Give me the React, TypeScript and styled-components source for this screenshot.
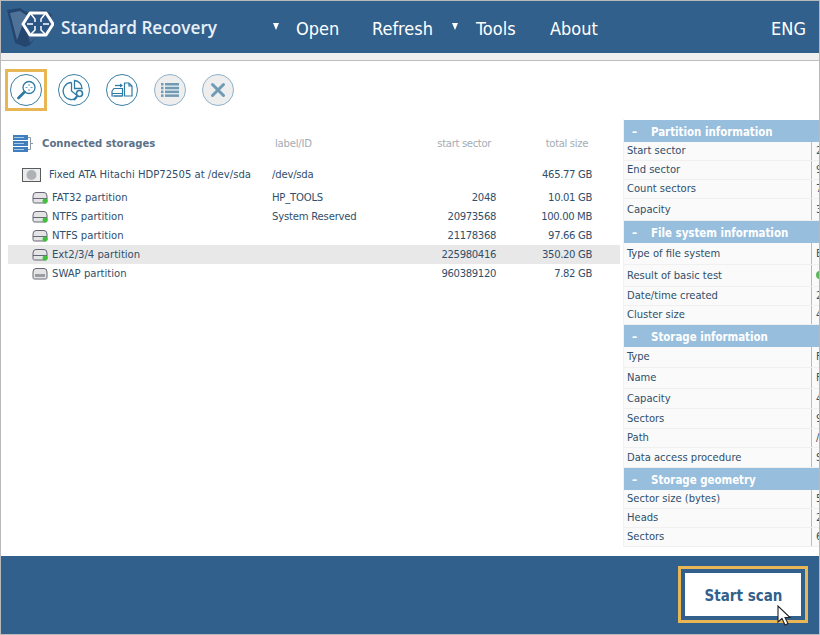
import React from "react";
import styled, { createGlobalStyle } from "styled-components";

const GlobalStyle = createGlobalStyle`
  html, body { margin: 0; padding: 0; background: #fff; }
  body { font-family: "DejaVu Sans Condensed", "DejaVu Sans", sans-serif; }
`;

const Window = styled.div`
  box-sizing: border-box;
  width: 820px;
  height: 635px;
  border: 1px solid #b9b9b9;
  display: flex;
  flex-direction: column;
  overflow: hidden;
  background: #fff;
`;

const Header = styled.header`
  height: 52px;
  flex: none;
  background: #32608c;
  display: flex;
  align-items: center;
  color: #fff;
`;

const Brand = styled.div`
  display: flex;
  align-items: center;
  width: 267px;
  padding-left: 6px;
  gap: 7px;
  box-sizing: border-box;
`;

const BrandName = styled.span`
  font-family: "Open Sans", sans-serif;
  font-size: 17.2px;
  font-weight: 600;
  color: #e8eff6;
`;

const MenuItem = styled.span<{ $width: number }>`
  display: flex;
  align-items: center;
  width: ${(p) => p.$width}px;
  font-size: 18px;
  line-height: 24px;
  padding-top: 3px;
`;

const Caret = styled.i<{ $width: number }>`
  display: block;
  width: ${(p) => p.$width}px;
  height: 12px;
  margin-top: 4px;
  &::before {
    content: "";
    display: block;
    margin: 0 0 0 5px;
    width: 0;
    height: 0;
    border-left: 3.5px solid transparent;
    border-right: 3.5px solid transparent;
    border-top: 7px solid #fff;
  }
`;

const Lang = styled.span`
  margin-left: auto;
  margin-right: 13px;
  font-size: 18px;
  padding-top: 3px;
`;

const SubBar = styled.div`
  height: 7px;
  flex: none;
  background: #f0f0f0;
  border-bottom: 1px solid #bdbdbd;
`;

const Toolbar = styled.div`
  height: 58px;
  flex: none;
  display: flex;
  align-items: center;
  gap: 16px;
  padding: 0 0 0 9px;
  box-sizing: border-box;
`;

const ToolSlot = styled.div<{ $active?: boolean }>`
  width: 32px;
  height: 32px;
  outline: ${(p) => (p.$active ? "3px solid #e8b654" : "none")};
  outline-offset: 2.5px;
`;

const ToolButton = styled.button<{ $disabled?: boolean }>`
  width: 32px;
  height: 32px;
  padding: 0;
  border-radius: 50%;
  display: flex;
  align-items: center;
  justify-content: center;
  border: 1.5px solid ${(p) => (p.$disabled ? "#8fb3c9" : "#3a7fa6")};
  background: ${(p) => (p.$disabled ? "#eeeeee" : "#fff")};
  color: ${(p) => (p.$disabled ? "#6f9bb5" : "#2f7ba5")};
  box-sizing: border-box;
`;

const Content = styled.main`
  flex: 1;
  min-height: 0;
  display: flex;
  align-items: flex-start;
`;

const LeftPane = styled.section`
  width: 622px;
  flex: none;
  padding: 3px 0 0 7px;
  box-sizing: border-box;
`;

const TreeRow = styled.div<{ $selected?: boolean; $height: number }>`
  display: grid;
  grid-template-columns: 264px 130px 94px 96px;
  align-items: center;
  height: ${(p) => p.$height}px;
  width: 612px;
  background: ${(p) => (p.$selected ? "#e8e8e8" : "transparent")};
  font-size: 11.2px;
  color: #2f4f6b;
`;

const HeadRow = styled(TreeRow)`
  height: 42px;
  color: #a3acb5;
  margin-bottom: 1px;
`;

const DiskRow = styled(TreeRow)`
  margin-bottom: 4px;
`;

const Heading = styled.div`
  display: flex;
  align-items: center;
  gap: 9px;
  padding-left: 5px;
  font-weight: bold;
  color: #5b7186;
`;

const NameCell = styled.div<{ $indent: number }>`
  display: flex;
  align-items: center;
  gap: 3px;
  padding-left: ${(p) => p.$indent}px;
  white-space: nowrap;
`;

const DiskName = styled(NameCell)`
  gap: 8px;
`;

const TextCell = styled.div<{ $inset?: number }>`
  padding-left: ${(p) => p.$inset ?? 0}px;
  letter-spacing: -0.2px;
  white-space: nowrap;
`;

const NumCell = styled.div<{ $inset?: number }>`
  text-align: right;
  padding-right: ${(p) => p.$inset ?? 0}px;
  letter-spacing: -0.35px;
  white-space: nowrap;
`;

const RightPane = styled.aside`
  flex: 1;
  min-width: 0;
  overflow: hidden;
  padding-top: 1px;
  border-left: 1px solid #f2f2f2;
`;

const SectionHead = styled.div`
  height: 22px;
  padding-top: 1px;
  box-sizing: border-box;
  background: #97bedd;
  color: #fff;
  display: flex;
  align-items: center;
  font-size: 11.4px;
  font-weight: bold;
  white-space: nowrap;
`;

const Dash = styled.span`
  width: 27px;
  padding-left: 8px;
  box-sizing: border-box;
`;

const InfoRow = styled.div<{ $height: number }>`
  display: grid;
  grid-template-columns: 188px 1fr;
  height: ${(p) => p.$height}px;
  background: #fafafa;
  border-bottom: 1px solid #f0f0f0;
  box-sizing: border-box;
  font-size: 11.1px;
  color: #2f4f6b;
`;

const InfoKey = styled.div`
  display: flex;
  align-items: center;
  padding: 0 0 1px 3px;
  border-right: 1px solid #bcbcbc;
  white-space: nowrap;
`;

const InfoValue = styled.div`
  display: flex;
  align-items: center;
  padding: 0 0 1px 4px;
  white-space: nowrap;
`;

const GreenDot = styled.span`
  width: 8px;
  height: 8px;
  border-radius: 50%;
  background: #5cb85c;
`;

const Footer = styled.footer`
  height: 78px;
  flex: none;
  background: #32608c;
  display: flex;
  justify-content: flex-end;
  align-items: flex-start;
  padding: 17px 18px 0 0;
  box-sizing: border-box;
`;

const ScanButton = styled.button`
  position: relative;
  width: 116px;
  height: 43px;
  background: #fff;
  border: none;
  padding: 2px 0 0 1px;
  color: #32608c;
  font-family: "DejaVu Sans Condensed", "DejaVu Sans", sans-serif;
  font-size: 15px;
  font-weight: bold;
  outline: 3px solid #e8b654;
  outline-offset: 4px;
`;

const Pointer = styled.svg`
  position: absolute;
  left: 92px;
  top: 32px;
`;

const Logo = () => (
  <svg width="47" height="46" viewBox="0 0 47 46">
    <path d="M0 6 L13 4 L19 8 L38 6 L45 11 L23 41 L18 43 L8 39 Z" fill="#25466f" />
    <path d="M3 9 L13 7 L19 11 L36 9 L16 20 L10 36 Z" fill="#4f7299" />
    <path d="M18 21 L23 39 L30 32 L20 18 Z" fill="#3a5f8a" />
    <path d="M23 9 L39 9 L46 20 L39 31 L23 31 L16 20 Z" fill="#2c5685" stroke="#fff" strokeWidth="3" strokeLinejoin="round" />
    <path
      d="M24 10 L28 15 V18 M38 10 L34 15 V18 M28 22 V26 L24 30 M34 22 V26 L38 30 M20 20 H26 M36 20 H42"
      stroke="#fff"
      strokeWidth="1.5"
      fill="none"
    />
  </svg>
);

const SearchIcon = () => (
  <svg width="24" height="24" viewBox="0 0 24 24" fill="none" stroke="currentColor">
    <circle cx="15" cy="9.5" r="6" strokeWidth="1.3" />
    <path d="M15 6v2M15 11v2M11.5 9.5h2M16.5 9.5h2" strokeWidth="1.1" opacity="0.7" />
    <path d="M10.5 14L4.5 20" strokeWidth="2.8" strokeLinecap="round" />
  </svg>
);

const ChartIcon = () => (
  <svg width="26" height="26" viewBox="0 0 26 26" fill="none" stroke="currentColor" strokeWidth="1.3">
    <path d="M10.5 5.5a8.5 8.5 0 1 0 5 15.5" />
    <path d="M10.5 5.5v8.5l5 4" />
    <path d="M13.5 3.5a8 8 0 0 1 7.5 8h-7.5z" />
    <circle cx="18.5" cy="16.5" r="3" strokeWidth="1.6" />
    <path d="M16.3 19l-3 3.5" strokeWidth="2" strokeLinecap="round" />
  </svg>
);

const TransferIcon = () => (
  <svg width="26" height="26" viewBox="0 0 26 26" fill="none" stroke="currentColor" strokeWidth="1.2">
    <path d="M15.5 6h4.5l3 3v10h-7.5z" />
    <path d="M20 6v3h3" />
    <path d="M3 14l2-2.5h8.5v7.500H3z" />
    <path d="M3 16.500h10M5 19h8" strokeWidth="1" />
    <path d="M6 8.500h7" strokeWidth="1.300" />
    <path d="M11 6.500l3 2-3 2z" fill="currentColor" stroke="none" />
  </svg>
);

const ListIcon = () => (
  <svg width="18" height="14" viewBox="0 0 18 14" fill="currentColor">
    <rect x="0" y="0" width="2.5" height="2.5" />
    <rect x="4" y="0" width="14" height="2.5" />
    <rect x="0" y="3.8" width="2.5" height="2.5" />
    <rect x="4" y="3.8" width="14" height="2.5" />
    <rect x="0" y="7.6" width="2.5" height="2.5" />
    <rect x="4" y="7.6" width="14" height="2.5" />
    <rect x="0" y="11.4" width="2.5" height="2.5" />
    <rect x="4" y="11.4" width="14" height="2.5" />
  </svg>
);

const CloseIcon = () => (
  <svg width="16" height="16" viewBox="0 0 16 16" stroke="currentColor" strokeWidth="3" strokeLinecap="round">
    <path d="M2.5 2.5l11 11M13.5 2.5l-11 11" />
  </svg>
);

const StorageIcon = () => (
  <svg width="20" height="17" viewBox="0 0 20 17">
    <path d="M15 2.500h2.500v12H15M17.500 8.500H20" stroke="#8a9aa8" fill="none" />
    <rect x="0" y="0" width="15" height="5" fill="#3f7fc0" />
    <rect x="0" y="6" width="15" height="5" fill="#3f7fc0" />
    <rect x="0" y="12" width="15" height="5" fill="#3f7fc0" />
    <path d="M1 2.500h10M1 8.500h10M1 14.500h10" stroke="#a9cbe8" />
  </svg>
);

const DiskIcon = () => (
  <svg width="19" height="14" viewBox="0 0 19 14">
    <rect x="0.500" y="0.500" width="18" height="13" fill="#ececec" stroke="#5b5b5b" />
    <circle cx="9.500" cy="7" r="5" fill="#aeb1b6" />
  </svg>
);

const PartitionIcon = () => (
  <svg width="17" height="14" viewBox="0 0 17 14">
    <path d="M1 5 Q1 1.500 4 1.500 H12 Q15 1.500 15 5 V10.500 Q15 12 13.500 12 H2.500 Q1 12 1 10.500 Z" fill="#e4e4e4" stroke="#667" />
    <path d="M1 7.500h14" stroke="#667" />
    <circle cx="13" cy="10" r="2.500" fill="#3fc23a" />
  </svg>
);

const SwapIcon = () => (
  <svg width="17" height="14" viewBox="0 0 17 14">
    <path d="M1 5 Q1 1.500 4 1.500 H12 Q15 1.500 15 5 V10.500 Q15 12 13.500 12 H2.500 Q1 12 1 10.500 Z" fill="#e4e4e4" stroke="#667" />
    <path d="M4 7v3M6 7v3M8 7v3M10 7v3M12 7v3" stroke="#556" />
  </svg>
);

const partitions = [
  { name: "FAT32 partition", label: "HP_TOOLS", start: "2048", size: "10.01 GB" },
  { name: "NTFS partition", label: "System Reserved", start: "20973568", size: "100.00 MB" },
  { name: "NTFS partition", label: "", start: "21178368", size: "97.66 GB" },
  { name: "Ext2/3/4 partition", label: "", start: "225980416", size: "350.20 GB", selected: true },
  { name: "SWAP partition", label: "", start: "960389120", size: "7.82 GB", swap: true },
];

type Info = { key: string; value: React.ReactNode; height: number };

const sections: { title: string; rows: Info[] }[] = [
  {
    title: "Partition information",
    rows: [
      { key: "Start sector", value: "225980416", height: 19 },
      { key: "End sector", value: "960389119", height: 19 },
      { key: "Count sectors", value: "734408704", height: 19 },
      { key: "Capacity", value: "350.20 GB", height: 22 },
    ],
  },
  {
    title: "File system information",
    rows: [
      { key: "Type of file system", value: "Ext4", height: 22 },
      { key: "Result of basic test", value: <GreenDot />, height: 22 },
      { key: "Date/time created", value: "2018-04-26", height: 19 },
      { key: "Cluster size", value: "4096", height: 19 },
    ],
  },
  {
    title: "Storage information",
    rows: [
      { key: "Type", value: "Fixed", height: 21 },
      { key: "Name", value: "Fixed ATA Hitachi", height: 21 },
      { key: "Capacity", value: "465.77 GB", height: 20 },
      { key: "Sectors", value: "976773168", height: 20 },
      { key: "Path", value: "/dev/sda", height: 19 },
      { key: "Data access procedure", value: "SCSI", height: 20 },
    ],
  },
  {
    title: "Storage geometry",
    rows: [
      { key: "Sector size (bytes)", value: "512", height: 19 },
      { key: "Heads", value: "255", height: 19 },
      { key: "Sectors", value: "63", height: 19 },
    ],
  },
];

export default function App() {
  return (
    <>
      <GlobalStyle />
      <Window>
        <Header>
          <Brand>
            <Logo />
            <BrandName>Standard Recovery</BrandName>
          </Brand>
          <Caret $width={28} />
          <MenuItem $width={76}>Open</MenuItem>
          <MenuItem $width={75}>Refresh</MenuItem>
          <Caret $width={29} />
          <MenuItem $width={74}>Tools</MenuItem>
          <MenuItem $width={60}>About</MenuItem>
          <Lang>ENG</Lang>
        </Header>
        <SubBar />
        <Toolbar>
          <ToolSlot $active><ToolButton><SearchIcon /></ToolButton></ToolSlot>
          <ToolSlot><ToolButton><ChartIcon /></ToolButton></ToolSlot>
          <ToolSlot><ToolButton><TransferIcon /></ToolButton></ToolSlot>
          <ToolSlot><ToolButton $disabled><ListIcon /></ToolButton></ToolSlot>
          <ToolSlot><ToolButton $disabled><CloseIcon /></ToolButton></ToolSlot>
        </Toolbar>
        <Content>
          <LeftPane>
            <HeadRow $height={42}>
              <Heading>
                <StorageIcon />
                Connected storages
              </Heading>
              <TextCell $inset={3}>label/ID</TextCell>
              <NumCell $inset={5}>start sector</NumCell>
              <NumCell $inset={4}>total size</NumCell>
            </HeadRow>
            <DiskRow $height={19}>
              <DiskName $indent={14}>
                <DiskIcon />
                Fixed ATA Hitachi HDP72505 at /dev/sda
              </DiskName>
              <TextCell>/dev/sda</TextCell>
              <NumCell />
              <NumCell>465.77 GB</NumCell>
            </DiskRow>
            {partitions.map((p) => (
              <TreeRow key={p.start} $height={19} $selected={p.selected}>
                <NameCell $indent={24}>
                  {p.swap ? <SwapIcon /> : <PartitionIcon />}
                  {p.name}
                </NameCell>
                <TextCell>{p.label}</TextCell>
                <NumCell>{p.start}</NumCell>
                <NumCell>{p.size}</NumCell>
              </TreeRow>
            ))}
          </LeftPane>
          <RightPane>
            {sections.map((s) => (
              <div key={s.title}>
                <SectionHead>
                  <Dash>–</Dash>
                  {s.title}
                </SectionHead>
                {s.rows.map((r) => (
                  <InfoRow key={r.key} $height={r.height}>
                    <InfoKey>{r.key}</InfoKey>
                    <InfoValue>{r.value}</InfoValue>
                  </InfoRow>
                ))}
              </div>
            ))}
          </RightPane>
        </Content>
        <Footer>
          <ScanButton>
            Start scan
            <Pointer width="16" height="22" viewBox="0 0 16 22">
              <path d="M1 1 V17 L5 13.500 L8 20 L11 18.500 L8 12.500 H13 Z" fill="#fff" stroke="#222" strokeWidth="1.100" />
            </Pointer>
          </ScanButton>
        </Footer>
      </Window>
    </>
  );
}
